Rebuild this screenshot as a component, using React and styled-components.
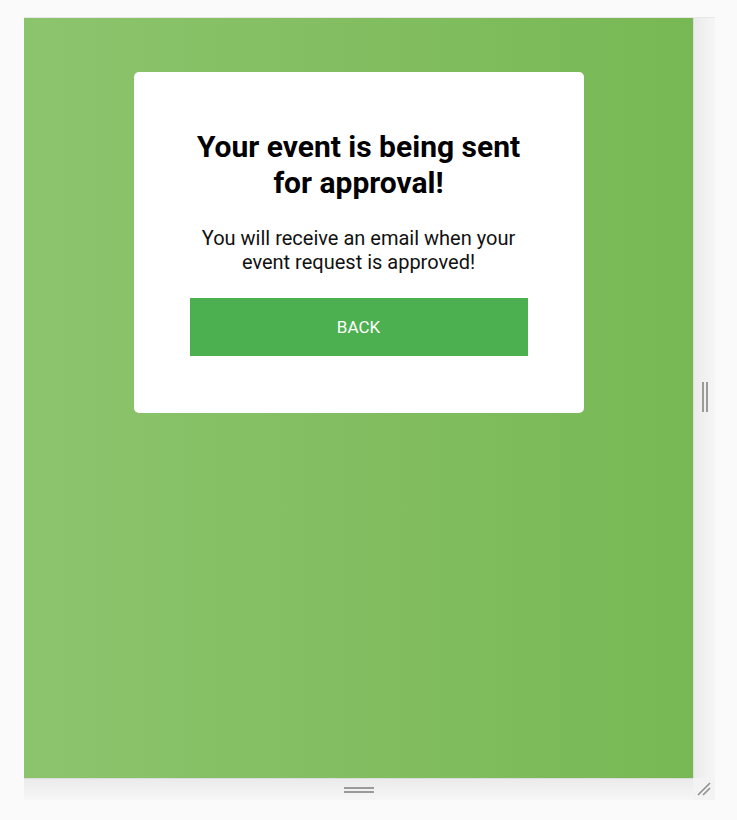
import React from "react";
import styled, { createGlobalStyle } from "styled-components";

const GlobalStyle = createGlobalStyle`
  html, body {
    margin: 0;
    padding: 0;
    background: #fafafa;
    font-family: Roboto, "Liberation Sans", sans-serif;
  }
`;

const Page = styled.div`
  padding: 17px 0 0 24px;
`;

const Frame = styled.div`
  display: grid;
  grid-template-columns: 669px 22px;
  grid-template-rows: 760px 22px;
  width: 691px;
  border-top: 1px solid #e6e6e6;
  background: #f3f3f3;
`;

const Stage = styled.div`
  background: linear-gradient(to right, #8cc46d, #78b854);
  display: flex;
  justify-content: center;
  align-items: flex-start;
  padding-top: 54px;
`;

const Card = styled.div`
  width: 450px;
  box-sizing: border-box;
  background: #fff;
  border-radius: 5px;
  padding: 57px 56px 57px;
  text-align: center;
`;

const Title = styled.h1`
  margin: 0;
  font-size: 30px;
  line-height: 36px;
  font-weight: 700;
  color: #000;
`;

const Message = styled.p`
  margin: 25px 0 24px;
  font-size: 20px;
  line-height: 24px;
  color: #111;
`;

const BackButton = styled.button`
  display: block;
  width: 100%;
  height: 58px;
  border: none;
  border-radius: 0;
  background: #4caf50;
  color: #fff;
  font-family: inherit;
  font-size: 17px;
  cursor: pointer;
`;

const SideHandle = styled.div`
  background: linear-gradient(to right, #ebebeb, #f6f6f6);
  border-left: 1px solid #dcdcdc;
  display: flex;
  align-items: center;
  justify-content: center;
  gap: 2px;
  padding-bottom: 2px;
`;

const BottomHandle = styled.div`
  background: linear-gradient(to bottom, #ebebeb, #f6f6f6);
  border-top: 1px solid #dcdcdc;
  display: flex;
  flex-direction: column;
  align-items: center;
  justify-content: center;
  gap: 2px;
`;

const Bar = styled.span`
  display: block;
  background: #9a9a9a;
  width: ${(p) => (p.vertical ? "2px" : "30px")};
  height: ${(p) => (p.vertical ? "30px" : "2px")};
`;

const Corner = styled.div`
  background: #f3f3f3;
  display: flex;
  align-items: center;
  justify-content: center;
`;

export default function App() {
  return (
    <>
      <GlobalStyle />
      <Page>
        <Frame>
          <Stage>
            <Card>
              <Title>Your event is being sent for approval!</Title>
              <Message>
                You will receive an email when your event request is approved!
              </Message>
              <BackButton>BACK</BackButton>
            </Card>
          </Stage>
          <SideHandle>
            <Bar vertical />
            <Bar vertical />
          </SideHandle>
          <BottomHandle>
            <Bar />
            <Bar />
          </BottomHandle>
          <Corner>
            <svg width="16" height="16" viewBox="0 0 16 16">
              <path d="M2 14 L14 2 M7 14 L14 7" stroke="#8f8f8f" strokeWidth="1.6" />
            </svg>
          </Corner>
        </Frame>
      </Page>
    </>
  );
}
